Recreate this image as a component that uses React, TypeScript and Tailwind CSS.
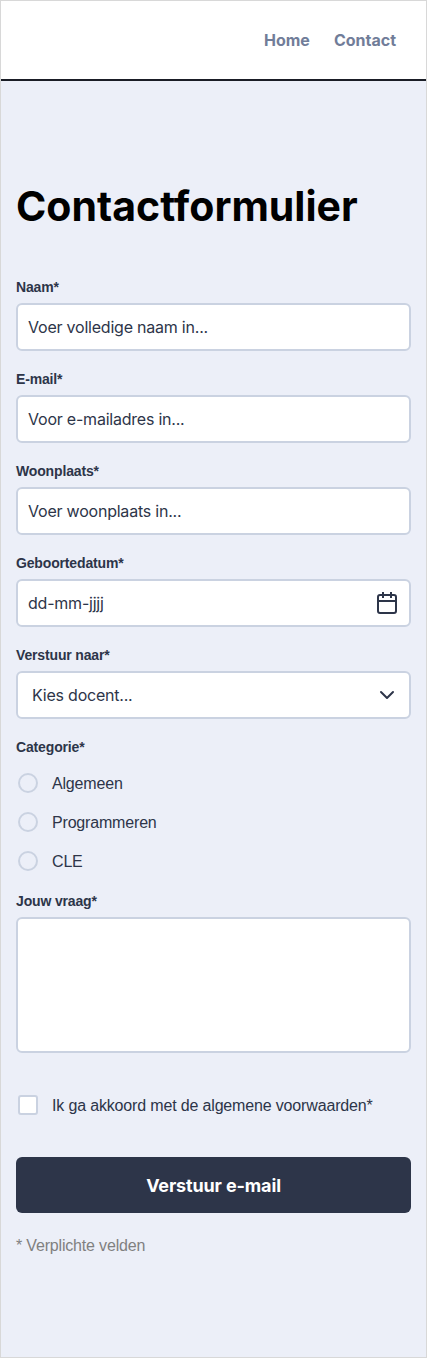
import type { ReactNode } from "react";

const inter = "font-['Inter',sans-serif]";

function Label({ children, className = "" }: { children: ReactNode; className?: string }) {
  return (
    <div className={`h-4 text-[14px] leading-4 font-bold tracking-[-0.011em] ${className}`}>
      <span>{children}</span>
    </div>
  );
}

function Field({ label, text, icon, inset }: { label: string; text: string; icon?: ReactNode; inset?: boolean }) {
  return (
    <div className="flex h-[92px] flex-col gap-2">
      <Label>{label}</Label>
      <div
        className={`flex h-12 items-center justify-between rounded-md border-2 border-[#cad2e1] bg-white pr-[10px] ${
          inset ? "pl-[14px]" : "pl-[10px]"
        }`}
      >
        <span className="font-['Inter',sans-serif] text-[16px] leading-6 tracking-[-0.22px]">{text}</span>
        {icon}
      </div>
    </div>
  );
}

function CalendarIcon() {
  return (
    <svg width="24" height="24" viewBox="0 0 24 24" fill="none" stroke="#2d3549" strokeWidth="2">
      <rect x="3" y="4" width="18" height="18" rx="2" />
      <path d="M3 10h18M8 1v6M16 1v6" />
    </svg>
  );
}

function ChevronIcon() {
  return (
    <svg width="24" height="24" viewBox="0 0 24 24" fill="none" stroke="#2d3549" strokeWidth="2" strokeLinecap="round" strokeLinejoin="round">
      <path d="m6 9 6 6 6-6" />
    </svg>
  );
}

const categories = ["Algemeen", "Programmeren", "CLE"];

export default function App() {
  return (
    <div className="flex h-[1358px] w-[427px] flex-col border border-[#d8d8d8] bg-[#eceff8] font-['Liberation_Sans',Arial,sans-serif] text-[#2d3549]">
      <header className="h-20 border-b-2 border-[#1a1d26] bg-white">
        <nav className={`flex h-[78px] items-center justify-end gap-6 pr-[30px] text-[16px] font-bold text-[#717d99] ${inter}`}>
          <span>Home</span>
          <span>Contact</span>
        </nav>
      </header>
      <main className="flex flex-col px-[15px] pt-[96px]">
        <h1 className={`h-[102px] text-[41px] leading-[58px] font-bold text-black ${inter}`}>Contactformulier</h1>
        <Field label="Naam*" text="Voer volledige naam in..." />
        <Field label="E-mail*" text="Voor e-mailadres in..." />
        <Field label="Woonplaats*" text="Voer woonplaats in..." />
        <Field label="Geboortedatum*" text="dd-mm-jjjj" icon={<CalendarIcon />} />
        <Field label="Verstuur naar*" text="Kies docent..." icon={<ChevronIcon />} inset />
        <Label>Categorie*</Label>
        <div className="mt-[18px] flex flex-col gap-[19px] pl-[2px]">
          {categories.map((name) => (
            <div key={name} className="flex h-5 items-center gap-[14px]">
              <span className="size-5 rounded-full border-2 border-[#cad2e1]" />
              <span className="pt-[2px] text-[16px] leading-5 tracking-[-0.011em]">{name}</span>
            </div>
          ))}
        </div>
        <Label className="mt-[22px]">Jouw vraag*</Label>
        <div className="mt-2 h-[136px] rounded-md border-2 border-[#cad2e1] bg-white" />
        <div className="mt-[42px] flex h-5 items-center gap-[14px] pl-[2px]">
          <span className="size-5 rounded-[3px] border-2 border-[#cad2e1] bg-white" />
          <span className="pt-[2px] text-[16px] leading-5 tracking-[-0.16px]">Ik ga akkoord met de algemene voorwaarden*</span>
        </div>
        <button className={`mt-[42px] h-14 rounded-md bg-[#2d3549] text-[18px] font-bold tracking-[-0.14px] text-white ${inter}`}>
          Verstuur e-mail
        </button>
        <p className="mt-[23px] text-[16px] leading-5 tracking-[-0.011em] text-[#808080]">* Verplichte velden</p>
      </main>
    </div>
  );
}
